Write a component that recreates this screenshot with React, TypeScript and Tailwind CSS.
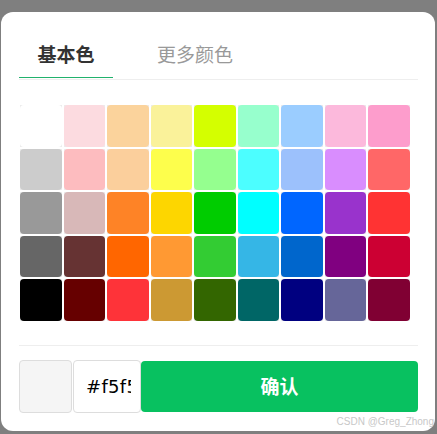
import React from "react";

const colors: string[][] = [
  ["#ffffff", "#fcdbe0", "#fbd39c", "#faf29a", "#d4ff00", "#97ffcd", "#9bcdff", "#fcb9dc", "#fd9dcc"],
  ["#cccccc", "#fdbcbf", "#fbcf9c", "#fdfe4c", "#95ff8f", "#4cfeff", "#9cc1fc", "#d98dfe", "#ff6767"],
  ["#999999", "#d8b8b8", "#fe8326", "#fdd600", "#00cc00", "#00ffff", "#0066ff", "#9933cc", "#ff3333"],
  ["#666666", "#663333", "#ff6600", "#ff9933", "#33cc33", "#35b6e6", "#0066cc", "#800080", "#cc0033"],
  ["#000000", "#660000", "#fe3339", "#cc9933", "#336600", "#006666", "#000080", "#666699", "#800033"],
];

export default function App() {
  return (
    <div className="w-[437px] h-[434px] bg-[#7f7f7f] pt-[12px] pl-[1px] overflow-hidden" style={{ fontFamily: '"Noto Sans", "Noto Sans CJK SC", sans-serif' }}>
      <div className="relative w-[434px] h-[419px] bg-white rounded-[12px] px-[18px]">
        {/* tabs */}
        <div className="flex pt-[28px]">
          <div className="w-[94px] flex justify-center border-b border-[#20b26c] pb-[9px]">
            <span className="text-[19px] leading-[28px] font-bold text-[#333333]" style={{ fontFamily: '"Noto Sans CJK SC", sans-serif' }}>基本色</span>
          </div>
          <div className="ml-[44px] pb-[9px]">
            <span className="text-[19px] leading-[28px] text-[#999999]" style={{ fontFamily: '"Noto Sans CJK SC", sans-serif' }}>更多颜色</span>
          </div>
        </div>
        <div className="mt-[1px] h-px bg-[#eeeeee] w-[399px]" />

        {/* grid */}
        <div className="mt-[25px] ml-[1px] w-[390px] grid grid-cols-9 gap-[2px]">
          {colors.flat().map((c, i) => (
            <div key={i} className="aspect-square bg-[#ececec]">
              <div className="w-full h-full rounded-[4px]" style={{ backgroundColor: c }} />
            </div>
          ))}
        </div>

        <div className="mt-[24px] h-px bg-[#eeeeee] w-[399px]" />

        {/* bottom row */}
        <div className="mt-[14px] flex items-stretch h-[53px] w-[399px]">
          <div className="w-[53px] h-[53px] bg-[#f5f5f5] border border-[#dddddd] rounded-[4px]" />
          <div className="ml-[1px] w-[68px] h-[53px] border border-[#dddddd] rounded-[4px] bg-white flex items-center pl-[12px] pr-[9px]">
            <div className="w-full overflow-hidden whitespace-nowrap">
              <span className="text-[18px] text-black tracking-[0.3px]" style={{ fontFamily: '"DejaVu Sans", sans-serif' }}>#f5f5f5</span>
            </div>
          </div>
          <div className="flex-1 h-[51px] mt-[1px] bg-[#08c160] rounded-[4px] flex items-center justify-center">
            <span className="text-white text-[19px] font-bold" style={{ fontFamily: '"Noto Sans CJK SC", sans-serif' }}>确认</span>
          </div>
        </div>

        <div className="absolute right-[1px] bottom-[3px] text-[10px] leading-[12px] text-[#c8c8c8] whitespace-nowrap" style={{ fontFamily: '"Liberation Sans", sans-serif' }}>
          CSDN @Greg_Zhong
        </div>
      </div>
    </div>
  );
}
